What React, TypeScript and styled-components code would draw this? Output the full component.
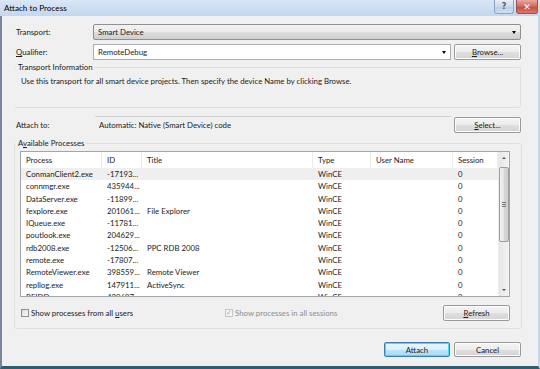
import React from "react";
import styled, { createGlobalStyle } from "styled-components";

const GlobalStyle = createGlobalStyle`
  html, body { margin: 0; padding: 0; width: 540px; height: 369px; overflow: hidden; background: #f0f0f0; }
  * { box-sizing: border-box; }
`;

const Window = styled.div`
  width: 540px;
  height: 369px;
  display: flex;
  flex-direction: column;
  background: #f0f0f0;
  font-family: Lato, "Open Sans", sans-serif;
  font-size: 7.8px;
  color: #1b1b1b;
`;

const TitleBar = styled.div`
  height: 16px;
  flex: none;
  display: flex;
  justify-content: space-between;
  padding: 0 2px 0 4px;
  background: linear-gradient(#d9e7f6, #c3d7ee);
`;

const Title = styled.span`
  font-size: 8.2px;
  line-height: 16px;
  color: #000;
`;

const Caption = styled.div`
  display: flex;
  gap: 2px;
`;

const CapBtn = styled.div<{ $close?: boolean }>`
  width: ${(p) => (p.$close ? 22 : 20)}px;
  height: 14px;
  display: flex;
  align-items: center;
  justify-content: center;
  border: 1px solid ${(p) => (p.$close ? "#a05050" : "#8ea6c2")};
  border-top: none;
  border-radius: 0 0 3px 3px;
  background: ${(p) =>
    p.$close
      ? "linear-gradient(#e9a99e, #d4665a 50%, #c44a3e 51%, #d77b6c)"
      : "linear-gradient(#e6eef8, #c9d9ec 50%, #b9cde6 51%, #cfdff0)"};
  color: ${(p) => (p.$close ? "#fff" : "#4a607a")};
  font-size: ${(p) => (p.$close ? 9 : 8)}px;
  font-weight: bold;
  font-family: "DejaVu Sans", sans-serif;
`;

const Frame = styled.div`
  flex: 1;
  display: flex;
  flex-direction: column;
  border-left: 2px solid #76889a;
  border-right: 2px solid #c3d7ee;
  border-bottom: 3px solid #2f5e70;
  padding: 0 17px 0 12px;
`;

const Row = styled.div<{ $mt: number; $h: number }>`
  display: flex;
  align-items: center;
  gap: 3px;
  margin-top: ${(p) => p.$mt}px;
  height: ${(p) => p.$h}px;
  flex: none;
`;

const Label = styled.span`
  width: 76px;
  padding-left: 2px;
  flex: none;
`;

const Combo = styled.div<{ $editable?: boolean }>`
  flex: 1;
  height: 100%;
  display: flex;
  align-items: center;
  justify-content: space-between;
  padding: 0 4px 0 4px;
  border: 1px solid ${(p) => (p.$editable ? "#abadb3" : "#8e8f8f")};
  border-radius: ${(p) => (p.$editable ? 0 : 2)}px;
  background: ${(p) =>
    p.$editable ? "#fff" : "linear-gradient(#f2f2f2, #ebebeb 50%, #dddddd 51%, #cfcfcf)"};
`;

const Arrow = styled.span`
  width: 0;
  height: 0;
  border-left: 2.5px solid transparent;
  border-right: 2.5px solid transparent;
  border-top: 3px solid #000;
`;

const Button = styled.div<{ $w: number; $def?: boolean; $h?: number }>`
  width: ${(p) => p.$w}px;
  height: ${(p) => p.$h ?? 16}px;
  flex: none;
  display: flex;
  align-items: center;
  justify-content: center;
  border: 1px solid ${(p) => (p.$def ? "#3c7fb1" : "#9a9a9a")};
  border-radius: 2px;
  box-shadow: inset 0 0 0 1px ${(p) => (p.$def ? "#48d8fb" : "#fcfcfc")};
  background: ${(p) =>
    p.$def
      ? "linear-gradient(#eaf6fd, #d9f0fc 50%, #bee6fd 51%, #a7d9f5)"
      : "linear-gradient(#f4f4f4, #ececec 50%, #dfdfdf 51%, #d4d4d4)"};
  color: #1b1b1b;
`;

const U = styled.span`
  text-decoration: underline;
`;

const Group = styled.fieldset<{ $h: number; $mt: number; $open?: boolean }>`
  margin: ${(p) => p.$mt}px 0 0 0;
  padding: 0 11px 0 5px;
  height: ${(p) => p.$h}px;
  flex: none;
  border: 1px solid #dfdfdf;
  border-left-color: ${(p) => (p.$open ? "transparent" : "#e2e2e2")};
  border-radius: 3px;
  display: flex;
  flex-direction: column;
`;

const Legend = styled.legend`
  margin-left: -4px;
  padding: 0 2px;
  line-height: 11px;
  font-size: 7.8px;
`;

const Desc = styled.div`
  margin-top: 3px;
  padding-left: 1px;
  line-height: 10px;
  white-space: nowrap;
`;

const ReadOnly = styled.div`
  flex: 1;
  height: 100%;
  margin-left: 2px;
  display: flex;
  align-items: center;
  padding-left: 4px;
  border-top: 1px solid #d2d2d2;
`;

const List = styled.div`
  margin-top: 2px;
  height: 146px;
  flex: none;
  display: flex;
  border: 1px solid #a3a6ab;
  background: #fff;
  overflow: hidden;
`;

const Table = styled.div`
  flex: 1;
  display: flex;
  flex-direction: column;
`;

const cols = "81px 40px 171px 58px 82px 45px";

const Header = styled.div`
  display: grid;
  grid-template-columns: ${cols};
  height: 16px;
  flex: none;
  background: #fff;
`;

const HeadCell = styled.div`
  padding-left: 5px;
  line-height: 16px;
  border-right: 1px solid #ececec;
  color: #222;
`;

const DataRow = styled.div<{ $sel?: boolean }>`
  display: grid;
  grid-template-columns: ${cols};
  height: 12.3px;
  flex: none;
  background: ${(p) => (p.$sel ? "#efefef" : "#fff")};
`;

const Cell = styled.div`
  padding-left: 5px;
  line-height: 12.3px;
  white-space: nowrap;
  overflow: hidden;
`;

const Scroll = styled.div`
  width: 11px;
  flex: none;
  display: flex;
  flex-direction: column;
  align-items: center;
  background: linear-gradient(90deg, #e6e6e6, #f4f4f4);
  border-left: 1px solid #ececec;
`;

const ScrollArrow = styled.div<{ $up?: boolean }>`
  height: 12px;
  width: 100%;
  flex: none;
  display: flex;
  align-items: center;
  justify-content: center;
  &::after {
    content: "";
    border-left: 2px solid transparent;
    border-right: 2px solid transparent;
    ${(p) => (p.$up ? "border-bottom: 2.5px solid #555;" : "border-top: 2.5px solid #555;")}
  }
`;

const Thumb = styled.div`
  margin-top: 3px;
  width: 10px;
  height: 75px;
  flex: none;
  border: 1px solid #9b9b9b;
  border-radius: 2px;
  background: linear-gradient(90deg, #f3f3f3, #e3e3e3 50%, #d6d6d6 51%, #cfcfcf);
  display: flex;
  align-items: center;
  justify-content: center;
`;

const Grip = styled.div`
  width: 4px;
  height: 5px;
  border-top: 1px solid #777;
  border-bottom: 1px solid #777;
  position: relative;
  &::after {
    content: "";
    position: absolute;
    left: 0;
    right: 0;
    top: 1px;
    border-top: 1px solid #777;
  }
`;

const ScrollSpace = styled.div`
  flex: 1;
`;

const CheckItem = styled.div<{ $w?: number; $disabled?: boolean }>`
  display: flex;
  align-items: center;
  gap: 2px;
  width: ${(p) => (p.$w ? `${p.$w}px` : "auto")};
  flex: none;
  color: ${(p) => (p.$disabled ? "#8d8d8d" : "#1b1b1b")};
  padding-left: 1px;
`;

const Box = styled.div<{ $disabled?: boolean }>`
  width: 8px;
  height: 8px;
  border: 1px solid ${(p) => (p.$disabled ? "#c5c5c5" : "#8e8f8f")};
  background: ${(p) => (p.$disabled ? "#f4f4f4" : "linear-gradient(135deg, #dcdcdc, #fafafa)")};
  display: flex;
  align-items: center;
  justify-content: center;
  color: #a8a8a8;
  font-size: 7px;
  line-height: 1;
  font-family: "DejaVu Sans", sans-serif;
`;

const Spacer = styled.div`
  flex: 1;
`;

const Footer = styled.div`
  display: flex;
  justify-content: flex-end;
  gap: 4px;
  margin-top: 13px;
  flex: none;
`;

const rows: string[][] = [
  ["ConmanClient2.exe", "-17193...", "", "WinCE", "", "0"],
  ["connmgr.exe", "435944...", "", "WinCE", "", "0"],
  ["DataServer.exe", "-11899...", "", "WinCE", "", "0"],
  ["fexplore.exe", "201061...", "File Explorer", "WinCE", "", "0"],
  ["IQueue.exe", "-11781...", "", "WinCE", "", "0"],
  ["poutlook.exe", "204629...", "", "WinCE", "", "0"],
  ["rdb2008.exe", "-12506...", "PPC RDB 2008", "WinCE", "", "0"],
  ["remote.exe", "-17807...", "", "WinCE", "", "0"],
  ["RemoteViewer.exe", "398559...", "Remote Viewer", "WinCE", "", "0"],
  ["repllog.exe", "147911...", "ActiveSync", "WinCE", "", "0"],
  ["RFIDDev.exe", "420697...", "", "WinCE", "", "0"],
];

const headers = ["Process", "ID", "Title", "Type", "User Name", "Session"];

export default function App() {
  return (
    <Window>
      <GlobalStyle />
      <TitleBar>
        <Title>Attach to Process</Title>
        <Caption>
          <CapBtn>?</CapBtn>
          <CapBtn $close>✕</CapBtn>
        </Caption>
      </TitleBar>
      <Frame>
        <Row $mt={8} $h={16}>
          <Label>Transport:</Label>
          <Combo>
            <span>Smart Device</span>
            <Arrow />
          </Combo>
        </Row>
        <Row $mt={4} $h={16}>
          <Label>
            <U>Q</U>ualifier:
          </Label>
          <Combo $editable>
            <span>RemoteDebug</span>
            <Arrow />
          </Combo>
          <Button $w={67}>
            <U>B</U>rowse...
          </Button>
        </Row>
        <Group $mt={2} $h={46} $open>
          <Legend>Transport Information</Legend>
          <Desc>
            Use this transport for all smart device projects. Then specify the device Name by clicking Browse.
          </Desc>
        </Group>
        <Row $mt={8} $h={17}>
          <Label>Attach to:</Label>
          <ReadOnly>Automatic: Native (Smart Device) code</ReadOnly>
          <Button $w={67}>
            <U>S</U>elect...
          </Button>
        </Row>
        <Group $mt={5} $h={191}>
          <Legend>
            A<U>v</U>ailable Processes
          </Legend>
          <List>
            <Table>
              <Header>
                {headers.map((h) => (
                  <HeadCell key={h}>{h}</HeadCell>
                ))}
              </Header>
              {rows.map((r, i) => (
                <DataRow key={i} $sel={i === 0}>
                  {r.map((c, j) => (
                    <Cell key={j}>{c}</Cell>
                  ))}
                </DataRow>
              ))}
            </Table>
            <Scroll>
              <ScrollArrow $up />
              <Thumb>
                <Grip />
              </Thumb>
              <ScrollSpace />
              <ScrollArrow />
            </Scroll>
          </List>
          <Row $mt={8} $h={16}>
            <CheckItem $w={201}>
              <Box />
              <span>
                Show processes from all <U>u</U>sers
              </span>
            </CheckItem>
            <CheckItem $disabled>
              <Box $disabled>✓</Box>
              <span>Show processes in all sessions</span>
            </CheckItem>
            <Spacer />
            <Button $w={67}>
              <U>R</U>efresh
            </Button>
          </Row>
        </Group>
        <Footer>
          <Button $w={66} $h={15} $def>
            Attach
          </Button>
          <Button $w={67} $h={15}>
            Cancel
          </Button>
        </Footer>
      </Frame>
    </Window>
  );
}
